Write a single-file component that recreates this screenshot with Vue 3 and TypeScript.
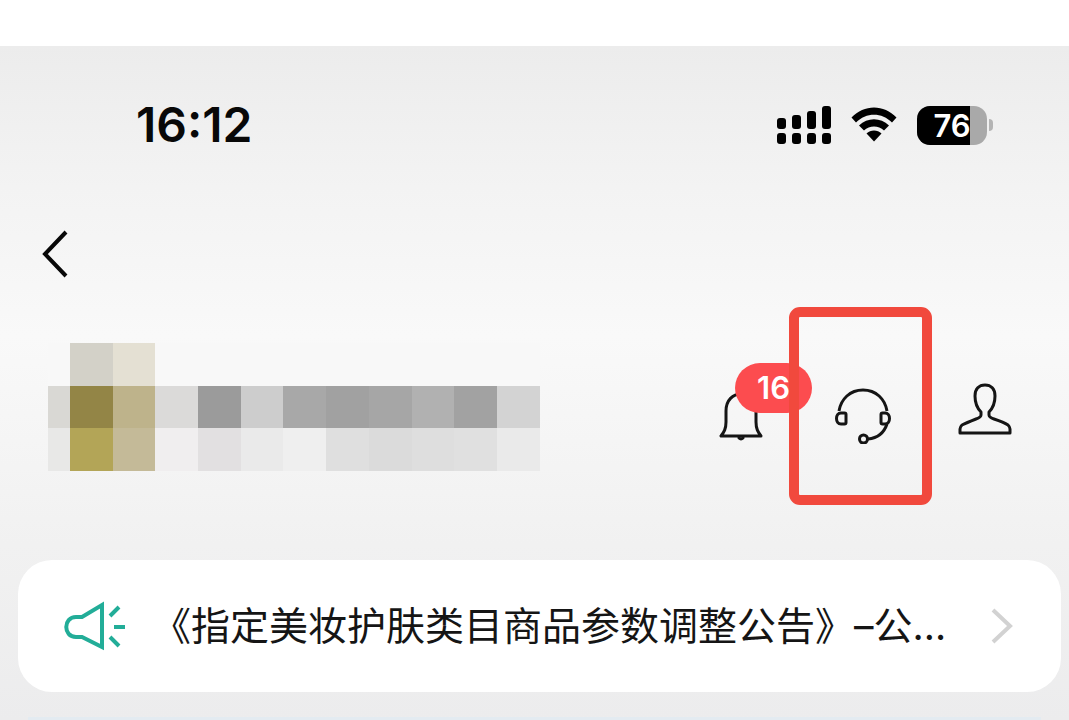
<script setup lang="ts">
const time = '16:12'
const battery = 76
const unread = 16
const notice = '《指定美妆护肤类目商品参数调整公告》–公…'

const mosaic: string[] = [
  '#f8f8f8', '#d3d1c8', '#e4e0d3', '#f8f8f8', '#f8f8f8', '#f8f8f8', '#f8f8f8', '#f8f8f8', '#f8f8f8', '#f8f8f8', '#f8f8f8', '#f8f8f8',
  '#d9d8d4', '#938546', '#beb38b', '#dbdad9', '#9b9b9b', '#cdcdcd', '#a8a8a8', '#a1a1a1', '#a6a6a6', '#b1b1b1', '#a2a2a2', '#d3d3d3',
  '#e8e8e7', '#b3a557', '#c4ba98', '#f0eeef', '#e2e0e1', '#eaeaea', '#efefef', '#dfdfdf', '#dbdbdb', '#dedede', '#e0e0e0', '#eaeaea',
]
</script>

<template>
  <main class="screen">
    <header class="status">
      <time class="clock">{{ time }}</time>
      <div class="indicators">
        <svg class="signal" width="54" height="40" viewBox="0 0 54 40" aria-label="信号">
          <rect x="0" y="13" width="9" height="11" rx="3" />
          <rect x="15" y="10" width="9" height="14" rx="3" />
          <rect x="30" y="6" width="9" height="18" rx="3" />
          <rect x="45" y="1" width="9" height="23" rx="3" />
          <rect x="0" y="28" width="9" height="11" rx="3" />
          <rect x="15" y="28" width="9" height="11" rx="3" />
          <rect x="30" y="28" width="9" height="11" rx="3" />
          <rect x="45" y="28" width="9" height="11" rx="3" />
        </svg>
        <svg class="wifi" width="46" height="36" viewBox="0 0 46 36" aria-label="无线网络">
          <path d="M0.5 10.5C13-3 33-3 45.500 10.500L41 15.500C31 5 15 5 5 15.500Z" />
          <path d="M8 18.500C16.500 10 29.500 10 38 18.500L33 23.500C27.500 18 18.500 18 13 23.500Z" />
          <path d="M15.500 26.500C19.500 22.500 26.500 22.500 30.500 26.500L23 34.500Z" />
        </svg>
        <div class="battery">
          <div class="cell">
            <span class="charge" :style="{ width: battery + '%' }"></span>
            <span class="percent">{{ battery }}</span>
          </div>
          <span class="cap"></span>
        </div>
      </div>
    </header>

    <nav class="nav">
      <button class="icon-button" type="button" aria-label="返回">
        <svg width="28" height="50" viewBox="0 0 28 50">
          <path d="M25 3L4 25L25 47" fill="none" stroke="#080808" stroke-width="4" />
        </svg>
      </button>
    </nav>

    <section class="profile">
      <div class="mosaic" aria-hidden="true">
        <span v-for="(color, i) in mosaic" :key="i" :style="{ background: color }"></span>
      </div>
      <div class="actions">
        <button class="icon-button bell" type="button" aria-label="消息">
          <svg width="44" height="58" viewBox="0 0 44 58">
            <path d="M2 53H42C39 49 37 46 37 39V28C37 17 30 11 22 11S7 17 7 28V39C7 46 5 49 2 53Z" />
            <path d="M20 54V55Q22 57 24 55V54" />
          </svg>
          <span class="badge">{{ unread }}</span>
        </button>
        <button class="icon-button service" type="button" aria-label="客服">
          <svg width="58" height="58" viewBox="0 0 58 58">
            <path d="M5 25C7 13 16 4 29 4S51 13 53 25" />
            <path d="M10.500 27H7C1 27 1 38 7 38H10.500Q12 38 12 36.500V28.500Q12 27 10.500 27Z" />
            <path d="M48.500 27H51C57 27 57 38 51 38H48.500Q47 38 47 36.500V28.500Q47 27 48.500 27Z" />
            <path d="M53 38C50 47 44 52 34 53" />
            <circle cx="29.500" cy="53" r="4" />
          </svg>
          <span class="highlight"></span>
        </button>
        <button class="icon-button person" type="button" aria-label="我的">
          <svg width="54" height="52" viewBox="0 0 54 52">
            <path d="M27 2C33 2 37 6 37 13C37 20 35 25 31 29V32C31 34 33 35 36 36C42 38 47 40 50 42Q52 44 52 46V50H2V46Q2 44 4 42C8 40 13 38 18 36C21 35 23 34 23 32V29C19 25 17 20 17 13C17 6 21 2 27 2Z" />
          </svg>
        </button>
      </div>
    </section>

    <a class="notice" href="#notice">
      <svg class="horn" width="62" height="50" viewBox="0 0 62 50" aria-hidden="true">
        <path d="M38 4V46L18 36H12C-1 36-1 16 12 16H18Z" />
        <path d="M46 15L55 6M50 26H61M46 36L55 45" />
      </svg>
      <span class="notice-text">{{ notice }}</span>
      <svg class="arrow" width="24" height="38" viewBox="0 0 24 38" aria-hidden="true">
        <path d="M3 3L20 19L3 35" />
      </svg>
    </a>
    <div class="next-card"></div>
  </main>
</template>

<style>
body {
  margin: 0;
  background: #ffffff;
}
</style>

<style scoped>
.screen {
  box-sizing: border-box;
  min-height: calc(100vh - 46px);
  margin-top: 46px;
  display: flex;
  flex-direction: column;
  overflow: hidden;
  background: linear-gradient(#ececec 0%, #f3f3f3 21%, #f9f9f9 43%, #f1f1f1 74%, #ececed 100%);
  font-family: Inter, "Noto Sans CJK SC", sans-serif;
  color: #080808;
}

.status {
  display: flex;
  align-items: center;
  justify-content: space-between;
  height: 158px;
  padding: 0 76px 0 136px;
}

.clock {
  font-size: 48px;
  line-height: 56px;
  font-weight: 600;
}

.indicators {
  display: flex;
  align-items: center;
  gap: 20px;
}

.battery {
  display: flex;
  align-items: center;
  gap: 2px;
}

.cell {
  position: relative;
  width: 70px;
  height: 39px;
  overflow: hidden;
  border-radius: 13px;
  background: #a9a9a9;
}

.charge {
  display: block;
  height: 100%;
  background: #000000;
}

.percent {
  position: absolute;
  inset: 0;
  text-align: center;
  color: #ffffff;
  font-size: 31px;
  line-height: 39px;
  font-weight: 600;
}

.cap {
  width: 4px;
  height: 12px;
  border-radius: 0 4px 4px 0;
  background: #b4b4b4;
}

.nav {
  display: flex;
  align-items: center;
  height: 100px;
  padding: 0 41px;
}

.icon-button {
  position: relative;
  display: block;
  padding: 0;
  border: 0;
  background: none;
  font: inherit;
  color: inherit;
}

.icon-button svg {
  display: block;
}

.profile {
  display: flex;
  align-items: center;
  justify-content: space-between;
  height: 206px;
  padding: 0 57px 0 48px;
}

.mosaic {
  display: grid;
  grid-template-columns: 22px repeat(11, 1fr);
  grid-template-rows: repeat(3, 1fr);
  width: 51%;
  height: 128px;
}

.actions {
  display: flex;
  align-items: center;
}

.actions svg {
  fill: none;
  stroke: #151515;
  stroke-width: 3;
  stroke-linejoin: round;
}

.bell {
  margin-top: 10px;
}

.service {
  margin: 16px 66px 0 71px;
}

.person {
  margin-top: 4px;
}

.badge {
  position: absolute;
  left: 16px;
  top: -20px;
  width: 77px;
  height: 50px;
  border-radius: 25px;
  background: #fc4c4f;
  color: #ffffff;
  font-size: 31px;
  line-height: 50px;
  font-weight: 600;
  text-align: center;
}

.highlight {
  position: absolute;
  left: -45px;
  top: -79px;
  box-sizing: border-box;
  width: 143px;
  height: 198px;
  border: 10px solid #f1493d;
  border-radius: 11px;
}

.notice {
  display: flex;
  align-items: center;
  box-sizing: border-box;
  height: 132px;
  margin: 50px 8px 0 18px;
  padding: 0 47px 0 46px;
  border-radius: 34px;
  background: #ffffff;
  color: #151515;
  text-decoration: none;
}

.horn {
  flex: none;
  fill: none;
  stroke: #22ad98;
  stroke-width: 4;
}

.notice-text {
  flex: 1;
  margin-left: 26px;
  overflow: hidden;
  white-space: nowrap;
  font-size: 39px;
  line-height: 58px;
}

.arrow {
  flex: none;
  fill: none;
  stroke: #d2d2d2;
  stroke-width: 4;
}

.next-card {
  height: 3px;
  margin: 25px 28px 0;
  background: #e3ebf1;
}
</style>
